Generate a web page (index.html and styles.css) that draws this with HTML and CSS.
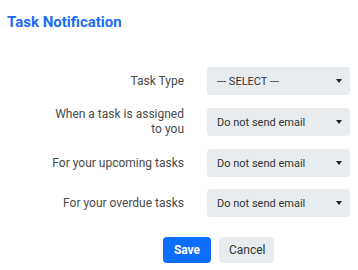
FILE: index.html
```html
<!DOCTYPE html>
<html>
<head>
<meta charset="utf-8">
<link rel="stylesheet" href="styles.css">
</head>
<body>
<div class="panel">
  <h2 class="title">Task Notification</h2>
  <form class="form">
    <label class="label">Task Type</label>
    <div class="select"><span>--- SELECT ---</span><i class="caret"></i></div>
    <label class="label">When a task is assigned to you</label>
    <div class="select"><span>Do not send email</span><i class="caret"></i></div>
    <label class="label">For your upcoming tasks</label>
    <div class="select"><span>Do not send email</span><i class="caret"></i></div>
    <label class="label">For your overdue tasks</label>
    <div class="select"><span>Do not send email</span><i class="caret"></i></div>
  </form>
  <div class="actions">
    <button class="btn btn-primary" type="button">Save</button>
    <button class="btn btn-light" type="button">Cancel</button>
  </div>
</div>
</body>
</html>
```
FILE: styles.css
```css
html, body {
  margin: 0;
  padding: 0;
  background: #fff;
}
body {
  font-family: Roboto, "Noto Sans", sans-serif;
  color: #333;
}
.panel {
  width: 358px;
  height: 270px;
  box-sizing: border-box;
  padding: 13px 8px 0 7px;
}
.title {
  margin: 0;
  font-size: 15px;
  line-height: 18px;
  font-weight: 700;
  color: #1a6cf5;
}
.form {
  margin-top: 36px;
  display: grid;
  grid-template-columns: 1fr 143px;
  column-gap: 23px;
  row-gap: 12px;
  align-items: center;
  padding-left: 45px;
}
.label {
  text-align: right;
  font-size: 12px;
  line-height: 15px;
  color: #4a4a4a;
}
.select {
  height: 28px;
  box-sizing: border-box;
  background: #e9ecef;
  border-radius: 4px;
  display: flex;
  align-items: center;
  justify-content: space-between;
  padding: 0 8px 0 10px;
  font-size: 11px;
  color: #333;
}
.caret {
  width: 0;
  height: 0;
  border-left: 3px solid transparent;
  border-right: 3px solid transparent;
  border-top: 4px solid #222;
}
.actions {
  display: flex;
  gap: 8px;
  margin-top: 20px;
  padding-left: 156px;
}
.btn {
  height: 26px;
  border: 0;
  border-radius: 4px;
  font-family: Roboto, "Noto Sans", sans-serif;
  font-size: 12px;
  padding: 0 10px;
  cursor: pointer;
}
.btn-primary {
  background: #0d6efd;
  color: #fff;
  font-weight: 700;
  width: 48px;
}
.btn-light {
  background: #e9ecef;
  color: #333;
  width: 55px;
}
```
